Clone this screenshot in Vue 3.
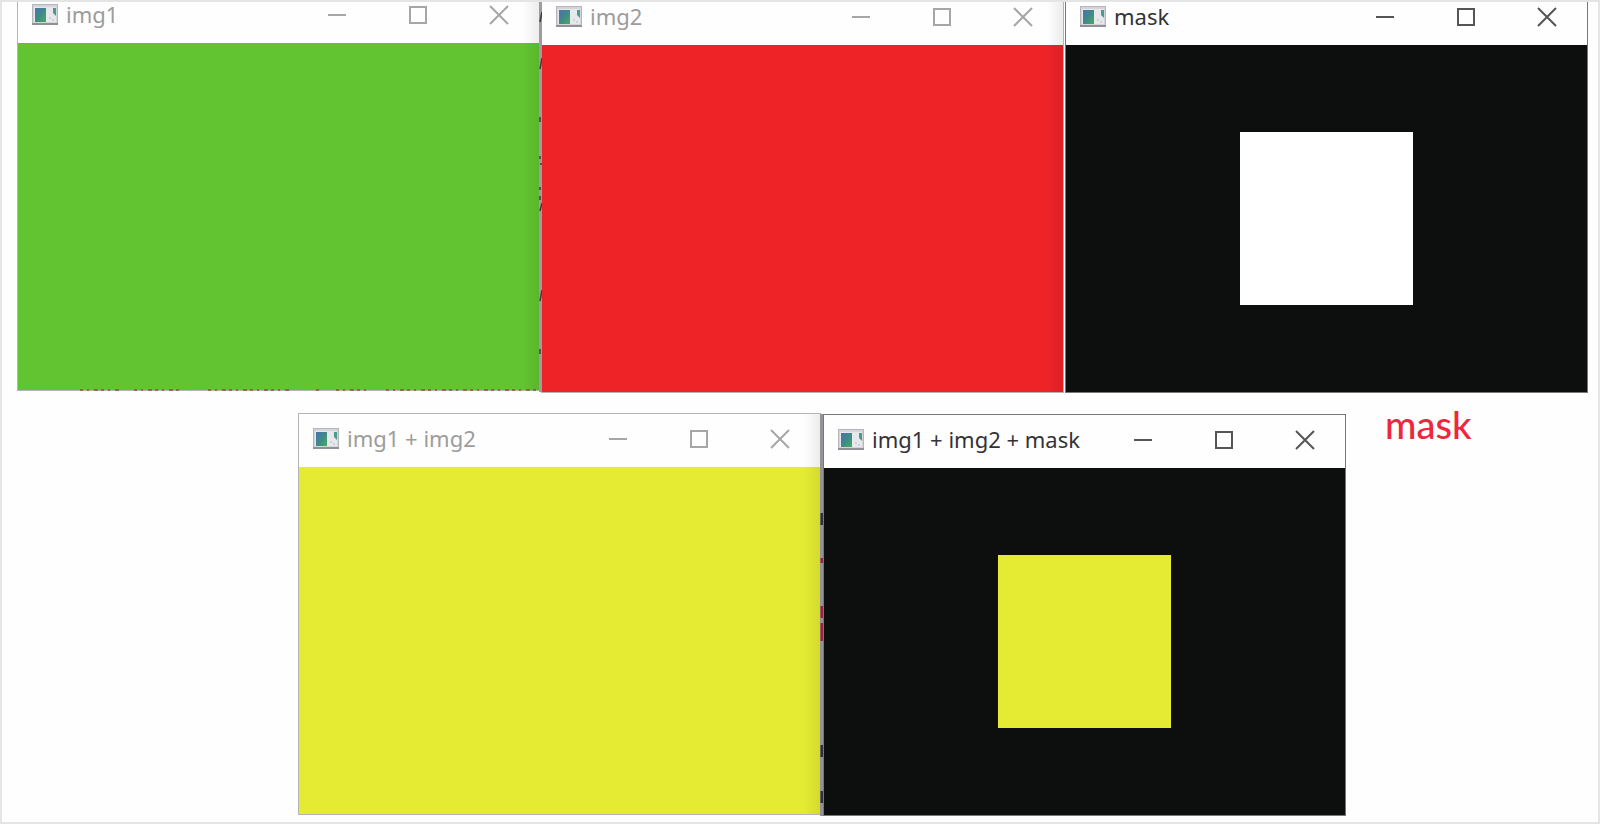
<template>
  <main class="desktop">
    <section
      v-for="win in windows"
      :key="win.title"
      class="window"
      :class="[win.name, { active: win.active }]"
    >
      <header class="title-bar">
        <svg class="app-icon" viewBox="0 0 26 21" aria-hidden="true">
          <defs>
            <linearGradient :id="'screen-' + win.name" x1="0" y1="0" x2="1" y2="1">
              <stop offset="0" stop-color="#4a72b0" />
              <stop offset="0.5" stop-color="#3f8a88" />
              <stop offset="1" stop-color="#46ad5c" />
            </linearGradient>
          </defs>
          <rect x="0.5" y="0.5" width="25" height="20" fill="#d3d5da" stroke="#b4b6bb" />
          <path d="M0 20H26" stroke="#8f9196" stroke-width="2" />
          <rect x="2" y="3" width="22" height="15" fill="#e6e8ec" />
          <rect x="3" y="4" width="11" height="14" :fill="'url(#screen-' + win.name + ')'" />
          <path d="M21 4h3v8l-3-3z" fill="#4b9a8f" />
          <path d="M17 13h2v2h-2zM20 15h2v2h-2z" fill="#cfd2d6" />
        </svg>
        <h2 class="title">{{ win.title }}</h2>
        <div class="controls">
          <button type="button" aria-label="Minimize">
            <svg viewBox="0 0 20 20"><path d="M1 10H19" /></svg>
          </button>
          <button type="button" aria-label="Maximize">
            <svg viewBox="0 0 20 20"><path d="M2 2H18V18H2Z" /></svg>
          </button>
          <button type="button" aria-label="Close">
            <svg viewBox="0 0 20 20"><path d="M1 1L19 19M19 1L1 19" /></svg>
          </button>
        </div>
      </header>
      <div class="canvas">
        <div v-if="win.active" class="square"></div>
      </div>
    </section>

    <!-- slivers of the editor that show between the windows -->
    <svg class="seam seam-top" viewBox="0 0 3 392" aria-hidden="true">
      <rect width="3" height="392" fill="#9d9da1" />
      <path
        d="M3 12L1 22M3 58L1 69M1 117v5M1 156v3M2 163v2M1 187v3M1 196v4M3 203L1 211M3 290L1 301M1 349v5"
        stroke="#3b3b40"
        stroke-width="1.5"
      />
    </svg>
    <svg class="seam seam-bottom" viewBox="0 0 3 402" aria-hidden="true">
      <rect width="3" height="402" fill="#929298" />
      <path d="M2 99v12M2 331v12M2 377v12" stroke="#303038" stroke-width="3" />
      <path d="M2 144v5M2 192v12M2 209v18" stroke="#96243f" stroke-width="3" />
    </svg>
    <svg class="code-edge" viewBox="0 0 460 3" aria-hidden="true">
      <path
        d="M0 1H42M54 1H102M128 1H212M236 1H240M256 1H286M306 1H460"
        stroke="#87512f"
        stroke-width="2"
        stroke-dasharray="3 4 2 5 4 3"
        opacity="0.7"
      />
    </svg>

    <p class="caption">mask</p>
  </main>
</template>

<script setup>
const windows = [
  { name: 'img1', title: 'img1', active: false },
  { name: 'img2', title: 'img2', active: false },
  { name: 'mask', title: 'mask', active: true },
  { name: 'sum', title: 'img1 + img2', active: false },
  { name: 'masked', title: 'img1 + img2 + mask', active: true }
];
</script>

<style>
body {
  margin: 0;
  background: #fefefe;
}
</style>

<style scoped>
.desktop {
  position: relative;
  min-height: 100vh;
  overflow: hidden;
  background: #fefefe;
  font-family: "Noto Sans", "Open Sans", sans-serif;
}

.desktop::after {
  content: "";
  position: absolute;
  inset: 0;
  border: 2px solid #e4e4e4;
  pointer-events: none;
}

.window {
  position: absolute;
  box-sizing: border-box;
  width: 32.6875%;
  border: 1px solid #b4b4b8;
  background: #fefefe;
  color: #9c9c9c;
}

.window.active {
  border-color: #77777a;
  color: #333336;
}

/* shade cast by the neighbour on the right */
.window:not(.active)::after {
  content: "";
  position: absolute;
  inset: 0 0 0 auto;
  width: 16px;
  background: linear-gradient(to right, rgba(0, 0, 0, 0), rgba(0, 0, 0, 0.07));
  pointer-events: none;
}

.img1 {
  left: 1.0625%;
  top: -11px;
}

.img2 {
  left: 33.8125%;
  top: -9px;
}

.mask {
  left: 66.5625%;
  top: -9px;
}

.sum {
  left: 18.625%;
  top: 413px;
}

.masked {
  left: 51.4375%;
  top: 414px;
}

.title-bar {
  display: flex;
  align-items: center;
  box-sizing: border-box;
  height: 53px;
  padding: 0 0 4px 14px;
}

.app-icon {
  flex: none;
  width: 26px;
  height: 21px;
}

.title {
  margin: 0 0 2px 8px;
  font-size: 22px;
  font-weight: 400;
  line-height: 30px;
  white-space: nowrap;
}

.controls {
  display: flex;
  margin-left: auto;
}

.controls button {
  display: flex;
  align-items: center;
  justify-content: center;
  width: 81px;
  height: 49px;
  padding: 0;
  border: none;
  background: none;
  color: #a6a6a6;
}

.active .controls button {
  color: #555558;
}

.controls svg {
  width: 20px;
  height: 20px;
  fill: none;
  stroke: currentColor;
  stroke-width: 2;
}

.canvas {
  display: flex;
  align-items: center;
  justify-content: center;
  aspect-ratio: 3 / 2;
}

.square {
  width: 33.33%;
  height: 50%;
}

.img1 .canvas {
  background: #61c430;
}

.img2 .canvas {
  background: #ed2328;
}

.sum .canvas {
  background: #e4eb32;
}

.mask .canvas,
.masked .canvas {
  background: #0c0f0d;
}

.mask .square {
  background: #ffffff;
}

.masked .square {
  background: #e4eb32;
}

.seam {
  position: absolute;
  width: 3px;
}

.seam-top {
  left: 33.6875%;
  top: 0;
  height: 392px;
}

.seam-bottom {
  left: 51.25%;
  top: 414px;
  height: 402px;
}

.code-edge {
  position: absolute;
  left: 5%;
  top: 389px;
  width: 28.75%;
  height: 3px;
}

.caption {
  position: absolute;
  left: 86.5625%;
  top: 402px;
  margin: 0;
  color: #f0263c;
  font-family: Lato, sans-serif;
  font-size: 38px;
  font-weight: 500;
  line-height: 44px;
}
</style>
